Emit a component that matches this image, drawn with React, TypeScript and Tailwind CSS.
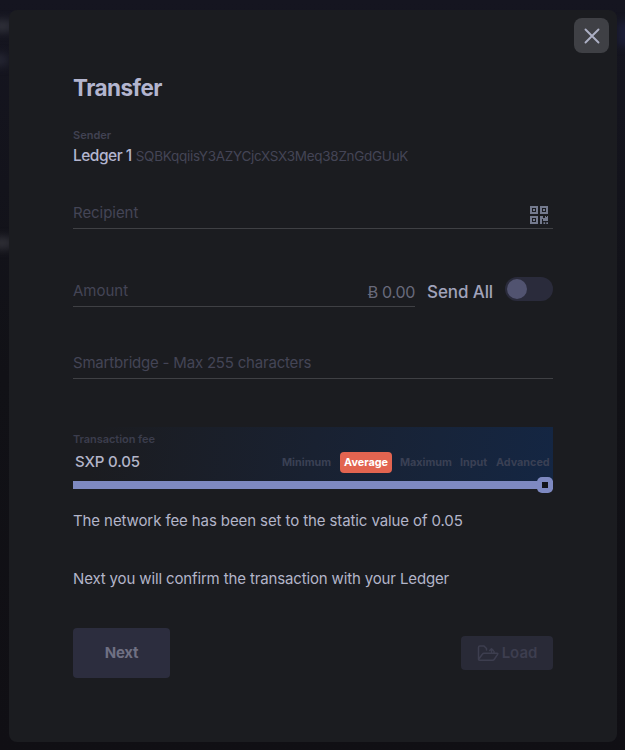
import React from "react";

function QrIcon() {
  return (
    <svg width="20" height="20" viewBox="0 0 20 20" fill="#747a8e" className="block">
      <path fillRule="evenodd" d="M1 1h8v8H1zM3 3v4h4V3zM11 1h8v8h-8zM13 3v4h4V3zM1 11h8v8H1zM3 13v4h4v-4z" />
      <path d="M4 4h2v2H4zM14 4h2v2h-2zM4 14h2v2H4zM11 11h3v2h2v-2h1v1h1v-1h1v5h-5v-2h-1v5h-2zM14.500 17.300h1.700V19h-1.700zM17.300 17.300H19V19h-1.700z" />
    </svg>
  );
}

function FolderIcon() {
  return (
    <svg width="22" height="17" viewBox="0 0 22 17" fill="none" stroke="#3d3e4f" strokeWidth="1.500" strokeLinejoin="round" strokeLinecap="round" className="block">
      <path d="M1.500 14V2.500Q1.500 1 3 1H7L9.500 3.500V5M17 7.500V6.500M1.500 14.500L5.500 9Q6 8.200 7 8.200H20Q21.300 8.200 20.600 9.300L17.500 14Q16.700 15.300 15.500 15.300H2.500Q1.500 15.300 1.500 14.300" />
      <path d="M14.500 7.500V4M12.700 5.500L14.500 3.700L16.300 5.500" />
    </svg>
  );
}

export default function App() {
  return (
    <div className="relative h-[750px] w-[625px] overflow-hidden bg-linear-to-b from-[#151520] via-[#111116] to-[#100f14] px-[9px] pt-[10px] font-['Inter',sans-serif]">
      <div className="absolute -left-2 top-5 h-3 w-5 bg-[#30313a] blur-[4px]" />
      <div className="absolute -left-3 top-[54px] h-3 w-5 bg-[#252633] blur-[4px]" />
      <div className="absolute -left-2 top-[237px] h-3 w-5 bg-[#303037] blur-[4px]" />
      <div className="absolute -right-2 top-[22px] h-6 w-4 bg-[#1c1e38] blur-[4px]" />
      <main className="relative flex h-[732px] w-[608px] flex-col rounded-lg bg-[#1b1c20] px-16">
        <button className="absolute right-2 top-2 flex size-[35px] items-center justify-center rounded-lg bg-[#3f4045]">
          <svg width="16" height="16" viewBox="0 0 16 16" stroke="#adb0c5" strokeWidth="1.900" strokeLinecap="round">
            <path d="M1.500 1.500L14.500 14.500M14.500 1.500L1.500 14.500" />
          </svg>
        </button>
        <h1 className="mt-[61px] h-8 whitespace-nowrap text-[22.500px] leading-[33px] font-bold tracking-[-0.550px] text-[#b3b5cf]">Transfer</h1>
        <div className="mt-[25px] h-[14px] text-[11px] leading-[14px] font-semibold text-[#414252]">Sender</div>
        <div className="mt-[2px] flex h-6 items-center gap-1 whitespace-nowrap text-[#b3b5cf]">
          <span className="text-[15.500px] font-medium tracking-[-0.500px]">Ledger 1</span>
          <span className="text-[13.500px] tracking-[-0.280px] text-[#444556]">SQBKqqiisY3AZYCjcXSX3Meq38ZnGdGUuK</span>
        </div>
        <div className="mt-[29px] flex h-[32px] justify-between border-b border-[#3f4044] text-[15px] leading-8 text-[#444556]">
          <span className="tracking-[-0.050px]">Recipient</span>
          <span className="mr-1 mt-[8px]"><QrIcon /></span>
        </div>
        <div className="mt-[46px] flex h-8">
          <div className="flex w-[342px] justify-between border-b border-[#3f4044] text-[15px] leading-8 text-[#444556]">
            <span>Amount</span>
            <span className="mt-[1px] h-7 text-base leading-8 tracking-[-0.300px] text-[#686a7b]">Ƀ 0.00</span>
          </div>
          <span className="ml-[12px] w-[66px] whitespace-nowrap text-[17px] leading-[34px] font-medium tracking-[-0.100px] text-[#a1a3bb]">Send All</span>
          <div className="ml-[12px] mt-[2px] flex h-6 w-12 items-center rounded-full bg-[#2a2b3b] px-[2px]">
            <div className="size-5 rounded-full bg-[#515370]" />
          </div>
        </div>
        <div className="mt-[40px] h-8 border-b border-[#3f4044] text-[15px] leading-[31px] tracking-[-0.200px] text-[#444556]">
          <span>Smartbridge - Max 255 characters</span>
        </div>
        <section className="relative mt-[48px] h-[62px] shrink-0 bg-[linear-gradient(100deg,#1b1c20_5%,#192131_50%,#17243a_75%,#142643_100%)]">
          <div className="pt-[6px] text-[11px] leading-[13px] font-semibold tracking-[-0.050px] whitespace-nowrap text-[#3b3d4d]">Transaction fee</div>
          <div className="flex h-[32px] items-center justify-between pl-[2px] pr-[3px]">
            <span className="whitespace-nowrap text-[15px] font-medium tracking-[-0.150px] text-[#b3b5c9]">SXP 0.05</span>
            <div className="flex h-[22px] items-center text-[10.800px] leading-[21px] font-bold whitespace-nowrap text-[#3a4054]">
              <span className="w-[58px]">Minimum</span>
              <span className="mr-2 w-[52px] rounded bg-[#e26450] text-center text-white">Average</span>
              <span className="w-[60px]">Maximum</span>
              <span className="w-[36px]">Input</span>
              <span className="w-[54px]">Advanced</span>
            </div>
          </div>
          <div className="mt-[3px] h-2 bg-[#7e89c1]" />
          <div className="absolute -bottom-[4px] right-0 flex size-4 items-center justify-center rounded-[5px] bg-[#7e89c1]">
            <div className="size-[6px] bg-[#121319]" />
          </div>
        </section>
        <p className="mt-[20px] h-6 whitespace-nowrap text-[15px] leading-6 tracking-[-0.100px] text-[#b3b5c9]">The network fee has been set to the static value of 0.05</p>
        <p className="mt-[34px] h-6 whitespace-nowrap text-[15px] leading-6 tracking-[-0.140px] text-[#b3b5c9]">Next you will confirm the transaction with your Ledger</p>
        <div className="mt-[37px] flex items-center justify-between">
          <button className="h-[50px] w-[97px] rounded bg-[#2c2d3e] text-[15px] font-bold tracking-[-0.200px] text-[#6f7083]">Next</button>
          <button className="flex h-[34px] w-[92px] items-center justify-center gap-[3px] rounded bg-[#292a37] text-[15px] font-semibold text-[#3d3e4f]"><FolderIcon />Load</button>
        </div>
      </main>
    </div>
  );
}
